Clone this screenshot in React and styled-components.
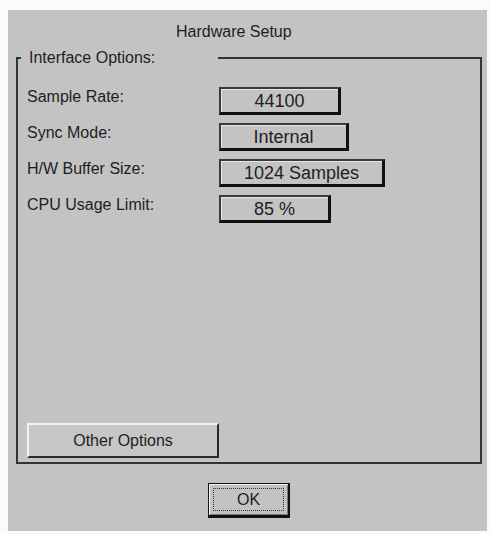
import React from "react";
import styled, { createGlobalStyle } from "styled-components";

const Global = createGlobalStyle`
  html, body { margin: 0; padding: 0; background: #fbfbfb; }
  body { font-family: "Liberation Sans", Arial, sans-serif; color: #1e1e1e; }
`;

const Dialog = styled.div`
  box-sizing: border-box;
  margin: 10px 3px 0 8px;
  width: 479px;
  height: 521px;
  background: #c3c3c3;
  padding: 13px 5px 0 8px;
  display: flex;
  flex-direction: column;
`;

const Title = styled.div`
  height: 18px;
  line-height: 18px;
  font-size: 16px;
  padding-left: 160px;
`;

const Group = styled.div`
  margin-top: 8px;
  display: flex;
  flex-direction: column;
  height: 415px;
`;

const GroupHead = styled.div`
  display: flex;
  height: 18px;
  align-items: flex-end;
`;

const Tick = styled.div`
  width: 3px;
  height: 8px;
  border-top: 2px solid #333;
  border-left: 2px solid #333;
`;

const Legend = styled.div`
  align-self: stretch;
  width: 189px;
  padding-left: 8px;
  font-size: 16px;
  line-height: 18px;
`;

const HeadLine = styled.div`
  flex: 1;
  height: 8px;
  border-top: 2px solid #333;
  border-right: 2px solid #333;
`;

const GroupBody = styled.div`
  flex: 1;
  border: 2px solid #333;
  border-top: none;
  padding: 20px 0 4px 9px;
  display: flex;
  flex-direction: column;
`;

const Rows = styled.div`
  display: flex;
  flex-direction: column;
  gap: 8px;
`;

const Row = styled.div`
  display: flex;
  align-items: flex-start;
`;

const Label = styled.div`
  width: 192px;
  font-size: 16px;
  line-height: 20px;
`;

const ValueBox = styled.div`
  box-sizing: border-box;
  width: ${(p) => p.$w}px;
  height: 28px;
  border-top: 2px solid #3a3a3a;
  border-left: 2px solid #3a3a3a;
  border-right: 3px solid #111;
  border-bottom: 3px solid #111;
  box-shadow: inset 1px 1px 0 #e6e6e6;
  display: flex;
  align-items: center;
  justify-content: center;
  font-size: 18px;
  padding-top: 1px;
`;

const Spacer = styled.div`
  flex: 1;
`;

const Button = styled.div`
  box-sizing: border-box;
  width: ${(p) => p.$w}px;
  height: 35px;
  display: flex;
  align-items: center;
  justify-content: center;
  font-size: 16px;
  background: #c6c6c6;
  border-top: 2px solid #f2f2f2;
  border-left: 2px solid #f2f2f2;
  border-right: 2px solid #2a2a2a;
  border-bottom: 2px solid #2a2a2a;
`;

const Footer = styled.div`
  display: flex;
  justify-content: center;
  padding-top: 19px;
  padding-left: 0px;
`;

const DefaultButton = styled.div`
  box-sizing: border-box;
  width: 82px;
  height: 35px;
  border: 1px solid #111;
  border-bottom-width: 3px;
  border-right-width: 2px;
  box-shadow: inset 1px 1px 0 #f2f2f2, inset -1px -1px 0 #777;
  padding: 4px;
  display: flex;
`;

const Focus = styled.div`
  flex: 1;
  border: 1px dotted #333;
  display: flex;
  align-items: center;
  justify-content: center;
  font-size: 16px;
`;

const rows = [
  { label: "Sample Rate:", value: "44100", w: 122 },
  { label: "Sync Mode:", value: "Internal", w: 130 },
  { label: "H/W Buffer Size:", value: "1024 Samples", w: 166 },
  { label: "CPU Usage Limit:", value: "85 %", w: 112 },
];

export default function App() {
  return (
    <>
      <Global />
      <Dialog>
        <Title>Hardware Setup</Title>
        <Group>
          <GroupHead>
            <Tick />
            <Legend>Interface Options:</Legend>
            <HeadLine />
          </GroupHead>
          <GroupBody>
            <Rows>
              {rows.map((r) => (
                <Row key={r.label}>
                  <Label>{r.label}</Label>
                  <ValueBox $w={r.w}>{r.value}</ValueBox>
                </Row>
              ))}
            </Rows>
            <Spacer />
            <Button $w={192}>Other Options</Button>
          </GroupBody>
        </Group>
        <Footer>
          <DefaultButton>
            <Focus>OK</Focus>
          </DefaultButton>
        </Footer>
      </Dialog>
    </>
  );
}
